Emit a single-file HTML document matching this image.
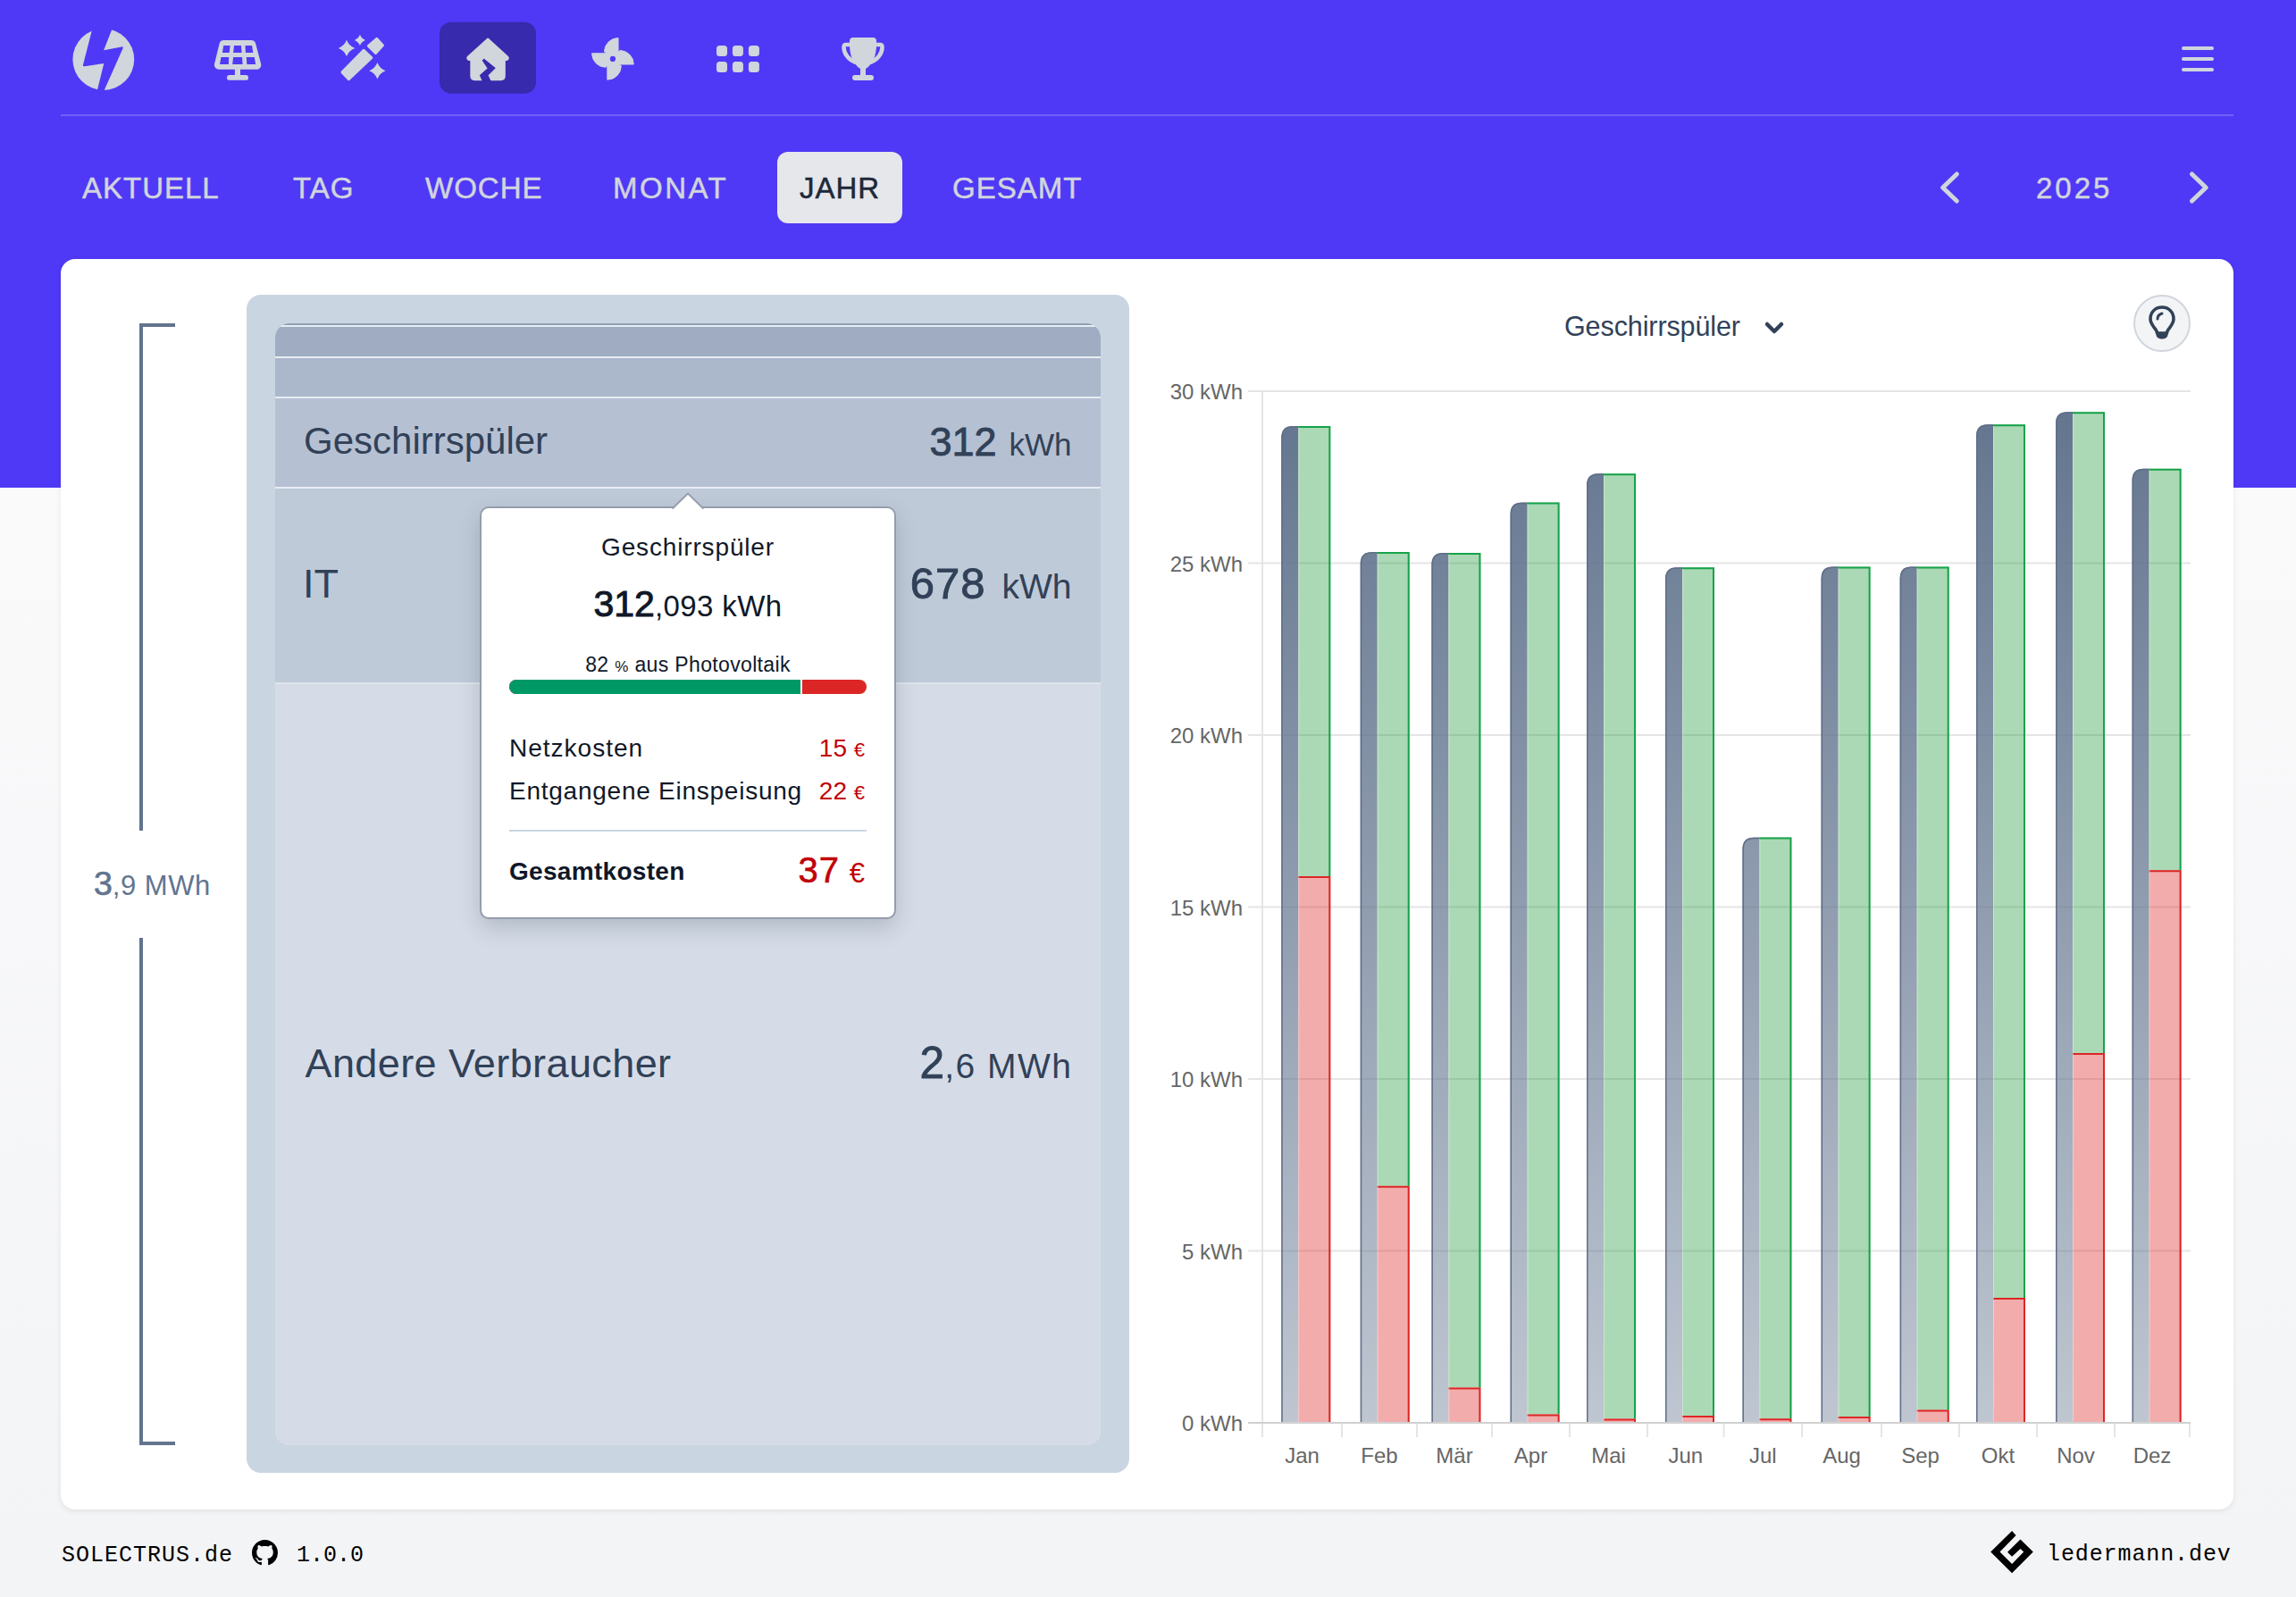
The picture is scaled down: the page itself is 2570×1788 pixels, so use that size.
<!DOCTYPE html>
<html lang="de">
<head>
<meta charset="utf-8">
<title>SOLECTRUS</title>
<style>
html,body{margin:0;padding:0}
body{width:2570px;height:1788px;position:relative;overflow:hidden;background:linear-gradient(180deg,#fafafb 0px,#fafafb 560px,#f3f4f6 1788px);font-family:"Liberation Sans",sans-serif}
.abs{position:absolute;white-space:nowrap}
#hdr{position:absolute;left:0;top:0;width:2570px;height:546px;background:#4f39f6}
#sep{position:absolute;left:68px;top:128px;width:2432px;height:2px;background:rgba(255,255,255,0.2)}
.tab{position:absolute;top:171px;height:79px;line-height:80px;font-size:33px;letter-spacing:1.0px;color:#d1d5dc;-webkit-text-stroke-width:0.5px}
.burger{position:absolute;left:2442px;width:36px;height:4px;border-radius:2px;background:#d1d5dc}
#card{position:absolute;left:68px;top:290px;width:2432px;height:1400px;background:#fff;border-radius:16px;box-shadow:0 2px 6px rgba(0,0,0,0.08)}
.br{position:absolute;background:#62748e}
#outer{position:absolute;left:276px;top:330px;width:988px;height:1319px;background:#cad5e2;border-radius:16px}
#inner{position:absolute;left:308px;top:362px;width:924px;height:1256px;border-radius:16px;overflow:hidden;background:#e8edf4}
.row{position:absolute;left:0;width:924px}
.lbl{position:absolute;left:32px;font-size:44px;color:#314158}
.val{position:absolute;right:32px;color:#314158}
#tip{position:absolute;left:537px;top:567px;width:462px;height:458px;background:#fff;border:2px solid #959dab;border-radius:10px;box-shadow:0 10px 24px rgba(30,41,57,0.18)}
.red{color:#c10007}
</style>
</head>
<body>
<div id="hdr"></div>
<svg width="1100" height="130" viewBox="0 0 1100 130" style="position:absolute;left:0;top:0">
<rect x="492" y="24.7" width="108" height="80" rx="13" fill="#372aac"/>
<defs><mask id="boltm" maskUnits="userSpaceOnUse" x="70" y="20" width="90" height="95"><rect x="70" y="20" width="90" height="95" fill="#fff"/><path d="M105.2,25 L128.4,25 L116.1,56.3 L136,52.4 Q138.5,52 137.6,54 L113.6,108 L107.2,108 L116.3,71.1 L95,74.3 Q92.3,74.6 93,72.5 Z" fill="#000"/></mask></defs>
<circle cx="115.8" cy="66.5" r="34.4" fill="#d1d5dc" mask="url(#boltm)"/>
<path d="M250.4,50.1 L281.3,50.1 L287.3,72.8 L244.9,72.8 Z" fill="#d1d5dc" stroke="#d1d5dc" stroke-width="10" stroke-linejoin="round"/>
<path d="M250.2,51.0 L257.6,51.0 L256.7,59.0 L248.9,59.0 Z" fill="#4f39f6"/>
<path d="M262.0,51.0 L269.9,51.0 L270.6,59.0 L261.1,59.0 Z" fill="#4f39f6"/>
<path d="M274.5,51.0 L282.0,51.0 L283.3,59.0 L274.9,59.0 Z" fill="#4f39f6"/>
<path d="M247.5,64.0 L256.1,64.0 L255.9,71.9 L246.0,71.9 Z" fill="#4f39f6"/>
<path d="M261.1,64.0 L271.0,64.0 L271.6,71.9 L260.2,71.9 Z" fill="#4f39f6"/>
<path d="M275.8,64.0 L284.8,64.0 L286.1,71.9 L276.3,71.9 Z" fill="#4f39f6"/>
<rect x="262.9" y="76" width="6.1" height="9" fill="#d1d5dc"/>
<rect x="253.9" y="84" width="24.1" height="5.8" rx="2.9" fill="#d1d5dc"/>
<path d="M388.00,44.70 Q390.58,51.32 397.20,53.90 Q390.58,56.48 388.00,63.10 Q385.42,56.48 378.80,53.90 Q385.42,51.32 388.00,44.70 Z" fill="#d1d5dc"/>
<path d="M402.90,38.80 Q404.61,43.19 409.00,44.90 Q404.61,46.61 402.90,51.00 Q401.19,46.61 396.80,44.90 Q401.19,43.19 402.90,38.80 Z" fill="#d1d5dc"/>
<path d="M422.40,70.10 Q424.98,76.72 431.60,79.30 Q424.98,81.88 422.40,88.50 Q419.82,81.88 413.20,79.30 Q419.82,76.72 422.40,70.10 Z" fill="#d1d5dc"/>
<path d="M407.1,56.3 L415.8,64.6 L390.4,88.6 L383,80.9 Z" fill="#d1d5dc" stroke="#d1d5dc" stroke-width="3" stroke-linejoin="round"/>
<path d="M412.4,51.5 L420.5,59.5 L428.4,50.7 L421.8,43.4 Z" fill="#d1d5dc" stroke="#d1d5dc" stroke-width="3" stroke-linejoin="round"/>
<path d="M546.1,43.5 L568,63.5 Q570,65.5 567,67 L564.8,67 V85 Q564.8,89.2 560.5,89.2 H531.5 Q527.3,89.2 527.3,85 V67 L525,67 Q522,65.5 524,63.5 Z" fill="#d1d5dc" stroke="#d1d5dc" stroke-width="2" stroke-linejoin="round"/>
<path d="M541.7,66.1 L554.2,76.2 L546.1,84.3 L549.1,91 L540.4,91 L537.3,84.3 L546.1,76.6 L540.2,67.8 Z" fill="#372aac" stroke="#372aac" stroke-width="1" stroke-linejoin="round"/>
<path d="M692.0,58.1 L692.0,42.6 A15.5,15.5 0 0 0 676.5,58.1 Z" fill="#d1d5dc" stroke="#d1d5dc" stroke-width="1" stroke-linejoin="round"/>
<path d="M693.7,72.0 L709.2,72.0 A15.5,15.5 0 0 0 693.7,56.5 Z" fill="#d1d5dc" stroke="#d1d5dc" stroke-width="1" stroke-linejoin="round"/>
<path d="M679.8,73.7 L679.8,89.2 A15.5,15.5 0 0 0 695.3,73.7 Z" fill="#d1d5dc" stroke="#d1d5dc" stroke-width="1" stroke-linejoin="round"/>
<path d="M678.1,59.8 L662.6,59.8 A15.5,15.5 0 0 0 678.1,75.3 Z" fill="#d1d5dc" stroke="#d1d5dc" stroke-width="1" stroke-linejoin="round"/>
<rect x="677.5" y="57.5" width="17" height="17" fill="#d1d5dc"/>
<circle cx="685.9" cy="65.9" r="3.1" fill="#4f39f6"/>
<rect x="802.0" y="51.0" width="12" height="12" rx="3.5" fill="#d1d5dc"/>
<rect x="802.0" y="68.9" width="12" height="12" rx="3.5" fill="#d1d5dc"/>
<rect x="819.9" y="51.0" width="12" height="12" rx="3.5" fill="#d1d5dc"/>
<rect x="819.9" y="68.9" width="12" height="12" rx="3.5" fill="#d1d5dc"/>
<rect x="837.9" y="51.0" width="12" height="12" rx="3.5" fill="#d1d5dc"/>
<rect x="837.9" y="68.9" width="12" height="12" rx="3.5" fill="#d1d5dc"/>
<path d="M955,42 H977 Q981,42 981,46 V50 C981,62 977,72 969,77 H963 C955,72 951,62 951,50 V46 Q951,42 955,42 Z" fill="#d1d5dc"/>
<path d="M955,50 L947,50 Q944.5,50 944.5,53 C944.5,60 950,67 957,69.5" fill="none" stroke="#d1d5dc" stroke-width="4.6" stroke-linecap="round"/>
<path d="M977,50 L985,50 Q987.5,50 987.5,53 C987.5,60 982,67 975,69.5" fill="none" stroke="#d1d5dc" stroke-width="4.6" stroke-linecap="round"/>
<rect x="963" y="76" width="6" height="9" fill="#d1d5dc"/>
<rect x="954" y="84" width="24" height="6" rx="3" fill="#d1d5dc"/>
</svg>
<div id="sep"></div>
<div class="burger" style="top:52px"></div>
<div class="burger" style="top:64px"></div>
<div class="burger" style="top:76px"></div>

<div class="tab" style="left:92px">AKTUELL</div>
<div class="tab" style="left:328px">TAG</div>
<div class="tab" style="left:476px">WOCHE</div>
<div class="tab" style="left:686px;letter-spacing:2.5px">MONAT</div>
<div style="position:absolute;left:870px;top:170px;width:140px;height:80px;border-radius:12px;background:#e5e7eb"></div>
<div class="tab" style="left:895px;color:#1e2939">JAHR</div>
<div class="tab" style="left:1066px">GESAMT</div>
<svg style="position:absolute;left:2160px;top:185px" width="330" height="50" viewBox="2160 185 330 50">
<path d="M2190.3,195 L2174.6,210 L2190.3,225" fill="none" stroke="#d1d5dc" stroke-width="5" stroke-linecap="round" stroke-linejoin="round"/>
<path d="M2453.5,195 L2469.2,210 L2453.5,225" fill="none" stroke="#d1d5dc" stroke-width="5" stroke-linecap="round" stroke-linejoin="round"/>
</svg>
<div class="tab" style="left:2279px;letter-spacing:3px">2025</div>

<div id="card"></div>
<!-- bracket -->
<div class="br" style="left:156px;top:362px;width:4px;height:568px"></div>
<div class="br" style="left:156px;top:362px;width:40px;height:4px"></div>
<div class="br" style="left:156px;top:1050px;width:4px;height:568px"></div>
<div class="br" style="left:156px;top:1614px;width:40px;height:4px"></div>
<div class="abs" id="t_total" style="left:105px;top:967.5px;color:#62748e;line-height:42px"><span style="font-size:37.5px;-webkit-text-stroke:0.7px #62748e">3</span><span style="font-size:31px;letter-spacing:0.5px">,9 MWh</span></div>

<div id="outer"></div>
<div id="inner">
  <div class="row" style="top:0;height:2px;background:#8f9eb3"></div>
  <div class="row" style="top:4px;height:33px;background:#9facc1"></div>
  <div class="row" style="top:39px;height:43px;background:#abb7ca"></div>
  <div class="row" style="top:84px;height:99px;background:#b5c0d2"></div>
  <div class="row" style="top:185px;height:217px;background:#bfcad8"></div>
  <div class="row" style="top:404px;height:860px;background:#d5dce7"></div>
  <div class="row" style="top:402px;height:2px;background:#dfe5ee"></div>
</div>
<div class="abs" id="t_gs" style="left:340px;top:470px;font-size:42px;line-height:48px;color:#314158">Geschirrspüler</div>
<div class="abs" id="t_gsv" style="right:1370.5px;top:467.5px;line-height:54px;color:#314158"><span style="font-size:45px;-webkit-text-stroke:0.9px #314158">312</span><span style="font-size:35px;margin-left:14px">kWh</span></div>
<div class="abs" id="t_it" style="left:339px;top:628px;font-size:45px;line-height:52px;color:#314158">IT</div>
<div class="abs" id="t_itv" style="right:1370.5px;top:624px;line-height:58px;color:#314158"><span style="font-size:49px;letter-spacing:1px;-webkit-text-stroke:0.9px #314158">678</span><span style="font-size:39px;margin-left:18px">kWh</span></div>
<div class="abs" id="t_av" style="left:341.5px;top:1165px;letter-spacing:0.4px;font-size:45px;line-height:52px;color:#314158">Andere Verbraucher</div>
<div class="abs" id="t_avv" style="right:1369.5px;top:1161px;line-height:58px;color:#314158"><span style="font-size:49.5px;-webkit-text-stroke:0.9px #314158">2</span><span style="font-size:39px;letter-spacing:1.5px">,6 MWh</span></div>

<!-- tooltip -->
<div id="tip"></div>
<svg style="position:absolute;left:750px;top:550px" width="40" height="22" viewBox="0 0 40 22">
<path d="M2.6,19.6 L20,2.6 L37.4,19.6" fill="#fff" stroke="#959dab" stroke-width="2"/>
<rect x="7" y="16.8" width="26" height="3" fill="#fff"/>
</svg>
<div class="abs" id="tp_title" style="left:537px;width:466px;top:596px;text-align:center;font-size:28px;letter-spacing:0.85px;line-height:34px;color:#101828">Geschirrspüler</div>
<div class="abs" id="tp_val" style="left:537px;width:466px;top:652px;text-align:center;color:#101828;line-height:48px"><span style="font-size:41px;-webkit-text-stroke:1px #101828">312</span><span style="font-size:33px;letter-spacing:0.4px">,093 kWh</span></div>
<div class="abs" id="tp_pv" style="left:537px;width:466px;top:730px;text-align:center;font-size:23px;letter-spacing:0.35px;color:#101828;line-height:28px">82 <span style="font-size:17px">%</span> aus Photovoltaik</div>
<div style="position:absolute;left:570px;top:761px;width:400px;height:16px;border-radius:8px;overflow:hidden;background:#dc2626">
  <div style="position:absolute;left:0;top:0;width:326px;height:16px;background:#009966"></div>
  <div style="position:absolute;left:326px;top:0;width:2px;height:16px;background:#fff"></div>
</div>
<div class="abs" id="tp_nk" style="left:570px;top:821px;font-size:28px;letter-spacing:1px;line-height:34px;color:#101828">Netzkosten</div>
<div class="abs red" style="right:1602px;top:821px;font-size:28px;line-height:34px">15 <span style="font-size:22px">€</span></div>
<div class="abs" id="tp_ee" style="left:570px;top:869px;font-size:28px;letter-spacing:0.75px;line-height:34px;color:#101828">Entgangene Einspeisung</div>
<div class="abs red" style="right:1602px;top:869px;font-size:28px;line-height:34px">22 <span style="font-size:22px">€</span></div>
<div style="position:absolute;left:570px;top:929px;width:400px;height:2px;background:#cad5e2"></div>
<div class="abs" id="tp_gk" style="left:570px;top:959px;font-size:28px;letter-spacing:0.3px;line-height:34px;color:#101828;font-weight:bold">Gesamtkosten</div>
<div class="abs red" style="right:1602px;top:952px;font-size:39px;line-height:44px"><span style="font-size:40px;letter-spacing:1px;-webkit-text-stroke:0.6px #c10007">37</span> <span style="font-size:31px">€</span></div>

<svg width="2570" height="1788" viewBox="0 0 2570 1788" style="position:absolute;left:0;top:0">
<defs><linearGradient id="gg" x1="0" y1="0" x2="0" y2="1" gradientUnits="userSpaceOnUse" ></linearGradient><linearGradient id="greyg" gradientUnits="userSpaceOnUse" x1="0" y1="438" x2="0" y2="1593"><stop offset="0" stop-color="#62748e" stop-opacity="1"/><stop offset="1" stop-color="#62748e" stop-opacity="0.41"/></linearGradient></defs>
<rect x="1397" y="1592.0" width="1055.0" height="2" fill="#e5e5e5"/>
<rect x="1397" y="1399.5" width="1055.0" height="2" fill="#e5e5e5"/>
<rect x="1397" y="1207.0" width="1055.0" height="2" fill="#e5e5e5"/>
<rect x="1397" y="1014.5" width="1055.0" height="2" fill="#e5e5e5"/>
<rect x="1397" y="822.0" width="1055.0" height="2" fill="#e5e5e5"/>
<rect x="1397" y="629.5" width="1055.0" height="2" fill="#e5e5e5"/>
<rect x="1397" y="437.0" width="1055.0" height="2" fill="#e5e5e5"/>
<rect x="1412" y="437" width="2" height="1172.0" fill="#e5e5e5"/>
<rect x="1412.0" y="1593" width="2" height="16" fill="#e5e5e5"/>
<rect x="1501.0" y="1593" width="2" height="16" fill="#e5e5e5"/>
<rect x="1585.0" y="1593" width="2" height="16" fill="#e5e5e5"/>
<rect x="1669.0" y="1593" width="2" height="16" fill="#e5e5e5"/>
<rect x="1756.0" y="1593" width="2" height="16" fill="#e5e5e5"/>
<rect x="1843.0" y="1593" width="2" height="16" fill="#e5e5e5"/>
<rect x="1928.6" y="1593" width="2" height="16" fill="#e5e5e5"/>
<rect x="2016.0" y="1593" width="2" height="16" fill="#e5e5e5"/>
<rect x="2105.0" y="1593" width="2" height="16" fill="#e5e5e5"/>
<rect x="2192.0" y="1593" width="2" height="16" fill="#e5e5e5"/>
<rect x="2279.0" y="1593" width="2" height="16" fill="#e5e5e5"/>
<rect x="2366.0" y="1593" width="2" height="16" fill="#e5e5e5"/>
<rect x="2450.0" y="1593" width="2" height="16" fill="#e5e5e5"/>
<path d="M1434.3,1592.0 V490.0 Q1434.3,477.0 1447.3,477.0 H1453.3 V1592.0 Z" fill="url(#greyg)"/>
<path d="M1435.0,1592.0 V490.0 Q1435.0,477.8 1447.3,477.8 H1453.3" fill="none" stroke="#5f6e87" stroke-width="1.5"/>
<rect x="1453.3" y="477.0" width="36" height="504.0" fill="rgba(22,150,50,0.36)"/>
<rect x="1453.3" y="981.0" width="36" height="611.0" fill="rgba(220,38,38,0.38)"/>
<path d="M1453.3,478.0 H1488.3 V981.0" fill="none" stroke="#16a34a" stroke-width="2"/>
<path d="M1453.3,982.0 H1488.3 V1592.0" fill="none" stroke="#dc2626" stroke-width="2"/>
<rect x="1453.3" y="479.0" width="1" height="1113.0" fill="rgba(255,255,255,0.35)"/>
<path d="M1522.7,1592.0 V631.0 Q1522.7,618.0 1535.7,618.0 H1541.7 V1592.0 Z" fill="url(#greyg)"/>
<path d="M1523.5,1592.0 V631.0 Q1523.5,618.8 1535.7,618.8 H1541.7" fill="none" stroke="#5f6e87" stroke-width="1.5"/>
<rect x="1541.7" y="618.0" width="36" height="709.8" fill="rgba(22,150,50,0.36)"/>
<rect x="1541.7" y="1327.8" width="36" height="264.2" fill="rgba(220,38,38,0.38)"/>
<path d="M1541.7,619.0 H1576.7 V1327.8" fill="none" stroke="#16a34a" stroke-width="2"/>
<path d="M1541.7,1328.8 H1576.7 V1592.0" fill="none" stroke="#dc2626" stroke-width="2"/>
<rect x="1541.7" y="620.0" width="1" height="972.0" fill="rgba(255,255,255,0.35)"/>
<path d="M1602.4,1592.0 V632.0 Q1602.4,619.0 1615.4,619.0 H1621.4 V1592.0 Z" fill="url(#greyg)"/>
<path d="M1603.2,1592.0 V632.0 Q1603.2,619.8 1615.4,619.8 H1621.4" fill="none" stroke="#5f6e87" stroke-width="1.5"/>
<rect x="1621.4" y="619.0" width="36" height="934.4" fill="rgba(22,150,50,0.36)"/>
<rect x="1621.4" y="1553.4" width="36" height="38.6" fill="rgba(220,38,38,0.38)"/>
<path d="M1621.4,620.0 H1656.4 V1553.4" fill="none" stroke="#16a34a" stroke-width="2"/>
<path d="M1621.4,1554.4 H1656.4 V1592.0" fill="none" stroke="#dc2626" stroke-width="2"/>
<rect x="1621.4" y="621.0" width="1" height="971.0" fill="rgba(255,255,255,0.35)"/>
<path d="M1690.6,1592.0 V575.6 Q1690.6,562.6 1703.6,562.6 H1709.6 V1592.0 Z" fill="url(#greyg)"/>
<path d="M1691.3,1592.0 V575.6 Q1691.3,563.4 1703.6,563.4 H1709.6" fill="none" stroke="#5f6e87" stroke-width="1.5"/>
<rect x="1709.6" y="562.6" width="36" height="1020.9" fill="rgba(22,150,50,0.36)"/>
<rect x="1709.6" y="1583.5" width="36" height="8.5" fill="rgba(220,38,38,0.38)"/>
<path d="M1709.6,563.6 H1744.6 V1583.5" fill="none" stroke="#16a34a" stroke-width="2"/>
<path d="M1709.6,1584.5 H1744.6 V1592.0" fill="none" stroke="#dc2626" stroke-width="2"/>
<rect x="1709.6" y="564.6" width="1" height="1027.4" fill="rgba(255,255,255,0.35)"/>
<path d="M1776.0,1592.0 V543.3 Q1776.0,530.3 1789.0,530.3 H1795.0 V1592.0 Z" fill="url(#greyg)"/>
<path d="M1776.8,1592.0 V543.3 Q1776.8,531.0 1789.0,531.0 H1795.0" fill="none" stroke="#5f6e87" stroke-width="1.5"/>
<rect x="1795.0" y="530.3" width="36" height="1058.1" fill="rgba(22,150,50,0.36)"/>
<rect x="1795.0" y="1588.4" width="36" height="3.6" fill="rgba(220,38,38,0.38)"/>
<path d="M1795.0,531.3 H1830.0 V1588.4" fill="none" stroke="#16a34a" stroke-width="2"/>
<path d="M1795.0,1589.4 H1830.0 V1592.0" fill="none" stroke="#dc2626" stroke-width="2"/>
<rect x="1795.0" y="532.3" width="1" height="1059.7" fill="rgba(255,255,255,0.35)"/>
<path d="M1864.0,1592.0 V648.2 Q1864.0,635.2 1877.0,635.2 H1883.0 V1592.0 Z" fill="url(#greyg)"/>
<path d="M1864.8,1592.0 V648.2 Q1864.8,636.0 1877.0,636.0 H1883.0" fill="none" stroke="#5f6e87" stroke-width="1.5"/>
<rect x="1883.0" y="635.2" width="36" height="949.8" fill="rgba(22,150,50,0.36)"/>
<rect x="1883.0" y="1585.0" width="36" height="7.0" fill="rgba(220,38,38,0.38)"/>
<path d="M1883.0,636.2 H1918.0 V1585.0" fill="none" stroke="#16a34a" stroke-width="2"/>
<path d="M1883.0,1586.0 H1918.0 V1592.0" fill="none" stroke="#dc2626" stroke-width="2"/>
<rect x="1883.0" y="637.2" width="1" height="954.8" fill="rgba(255,255,255,0.35)"/>
<path d="M1950.4,1592.0 V950.6 Q1950.4,937.6 1963.4,937.6 H1969.4 V1592.0 Z" fill="url(#greyg)"/>
<path d="M1951.2,1592.0 V950.6 Q1951.2,938.4 1963.4,938.4 H1969.4" fill="none" stroke="#5f6e87" stroke-width="1.5"/>
<rect x="1969.4" y="937.6" width="36" height="650.7" fill="rgba(22,150,50,0.36)"/>
<rect x="1969.4" y="1588.3" width="36" height="3.7" fill="rgba(220,38,38,0.38)"/>
<path d="M1969.4,938.6 H2004.4 V1588.3" fill="none" stroke="#16a34a" stroke-width="2"/>
<path d="M1969.4,1589.3 H2004.4 V1592.0" fill="none" stroke="#dc2626" stroke-width="2"/>
<rect x="1969.4" y="939.6" width="1" height="652.4" fill="rgba(255,255,255,0.35)"/>
<path d="M2038.6,1592.0 V647.5 Q2038.6,634.5 2051.6,634.5 H2057.6 V1592.0 Z" fill="url(#greyg)"/>
<path d="M2039.3,1592.0 V647.5 Q2039.3,635.2 2051.6,635.2 H2057.6" fill="none" stroke="#5f6e87" stroke-width="1.5"/>
<rect x="2057.6" y="634.5" width="36" height="951.5" fill="rgba(22,150,50,0.36)"/>
<rect x="2057.6" y="1586.0" width="36" height="6.0" fill="rgba(220,38,38,0.38)"/>
<path d="M2057.6,635.5 H2092.6 V1586.0" fill="none" stroke="#16a34a" stroke-width="2"/>
<path d="M2057.6,1587.0 H2092.6 V1592.0" fill="none" stroke="#dc2626" stroke-width="2"/>
<rect x="2057.6" y="636.5" width="1" height="955.5" fill="rgba(255,255,255,0.35)"/>
<path d="M2126.7,1592.0 V647.5 Q2126.7,634.5 2139.7,634.5 H2145.7 V1592.0 Z" fill="url(#greyg)"/>
<path d="M2127.4,1592.0 V647.5 Q2127.4,635.2 2139.7,635.2 H2145.7" fill="none" stroke="#5f6e87" stroke-width="1.5"/>
<rect x="2145.7" y="634.5" width="36" height="944.0" fill="rgba(22,150,50,0.36)"/>
<rect x="2145.7" y="1578.5" width="36" height="13.5" fill="rgba(220,38,38,0.38)"/>
<path d="M2145.7,635.5 H2180.7 V1578.5" fill="none" stroke="#16a34a" stroke-width="2"/>
<path d="M2145.7,1579.5 H2180.7 V1592.0" fill="none" stroke="#dc2626" stroke-width="2"/>
<rect x="2145.7" y="636.5" width="1" height="955.5" fill="rgba(255,255,255,0.35)"/>
<path d="M2212.0,1592.0 V488.2 Q2212.0,475.2 2225.0,475.2 H2231.0 V1592.0 Z" fill="url(#greyg)"/>
<path d="M2212.8,1592.0 V488.2 Q2212.8,475.9 2225.0,475.9 H2231.0" fill="none" stroke="#5f6e87" stroke-width="1.5"/>
<rect x="2231.0" y="475.2" width="36" height="977.8" fill="rgba(22,150,50,0.36)"/>
<rect x="2231.0" y="1453.0" width="36" height="139.0" fill="rgba(220,38,38,0.38)"/>
<path d="M2231.0,476.2 H2266.0 V1453.0" fill="none" stroke="#16a34a" stroke-width="2"/>
<path d="M2231.0,1454.0 H2266.0 V1592.0" fill="none" stroke="#dc2626" stroke-width="2"/>
<rect x="2231.0" y="477.2" width="1" height="1114.8" fill="rgba(255,255,255,0.35)"/>
<path d="M2301.0,1592.0 V474.3 Q2301.0,461.3 2314.0,461.3 H2320.0 V1592.0 Z" fill="url(#greyg)"/>
<path d="M2301.8,1592.0 V474.3 Q2301.8,462.1 2314.0,462.1 H2320.0" fill="none" stroke="#5f6e87" stroke-width="1.5"/>
<rect x="2320.0" y="461.3" width="36" height="717.7" fill="rgba(22,150,50,0.36)"/>
<rect x="2320.0" y="1179.0" width="36" height="413.0" fill="rgba(220,38,38,0.38)"/>
<path d="M2320.0,462.3 H2355.0 V1179.0" fill="none" stroke="#16a34a" stroke-width="2"/>
<path d="M2320.0,1180.0 H2355.0 V1592.0" fill="none" stroke="#dc2626" stroke-width="2"/>
<rect x="2320.0" y="463.3" width="1" height="1128.7" fill="rgba(255,255,255,0.35)"/>
<path d="M2386.6,1592.0 V537.8 Q2386.6,524.8 2399.6,524.8 H2405.6 V1592.0 Z" fill="url(#greyg)"/>
<path d="M2387.3,1592.0 V537.8 Q2387.3,525.5 2399.6,525.5 H2405.6" fill="none" stroke="#5f6e87" stroke-width="1.5"/>
<rect x="2405.6" y="524.8" width="36" height="449.5" fill="rgba(22,150,50,0.36)"/>
<rect x="2405.6" y="974.3" width="36" height="617.7" fill="rgba(220,38,38,0.38)"/>
<path d="M2405.6,525.8 H2440.6 V974.3" fill="none" stroke="#16a34a" stroke-width="2"/>
<path d="M2405.6,975.3 H2440.6 V1592.0" fill="none" stroke="#dc2626" stroke-width="2"/>
<rect x="2405.6" y="526.8" width="1" height="1065.2" fill="rgba(255,255,255,0.35)"/>
<rect x="1397" y="1592" width="1055.0" height="2" fill="#d0d0d0"/>
<text x="1391" y="1602.0" text-anchor="end" font-family="Liberation Sans" font-size="24" fill="#666">0 kWh</text>
<text x="1391" y="1409.5" text-anchor="end" font-family="Liberation Sans" font-size="24" fill="#666">5 kWh</text>
<text x="1391" y="1217.0" text-anchor="end" font-family="Liberation Sans" font-size="24" fill="#666">10 kWh</text>
<text x="1391" y="1024.5" text-anchor="end" font-family="Liberation Sans" font-size="24" fill="#666">15 kWh</text>
<text x="1391" y="832.0" text-anchor="end" font-family="Liberation Sans" font-size="24" fill="#666">20 kWh</text>
<text x="1391" y="639.5" text-anchor="end" font-family="Liberation Sans" font-size="24" fill="#666">25 kWh</text>
<text x="1391" y="447.0" text-anchor="end" font-family="Liberation Sans" font-size="24" fill="#666">30 kWh</text>
<text x="1457.5" y="1638" text-anchor="middle" font-family="Liberation Sans" font-size="24" fill="#666">Jan</text>
<text x="1544.0" y="1638" text-anchor="middle" font-family="Liberation Sans" font-size="24" fill="#666">Feb</text>
<text x="1628.0" y="1638" text-anchor="middle" font-family="Liberation Sans" font-size="24" fill="#666">Mär</text>
<text x="1713.5" y="1638" text-anchor="middle" font-family="Liberation Sans" font-size="24" fill="#666">Apr</text>
<text x="1800.5" y="1638" text-anchor="middle" font-family="Liberation Sans" font-size="24" fill="#666">Mai</text>
<text x="1886.8" y="1638" text-anchor="middle" font-family="Liberation Sans" font-size="24" fill="#666">Jun</text>
<text x="1973.3" y="1638" text-anchor="middle" font-family="Liberation Sans" font-size="24" fill="#666">Jul</text>
<text x="2061.5" y="1638" text-anchor="middle" font-family="Liberation Sans" font-size="24" fill="#666">Aug</text>
<text x="2149.5" y="1638" text-anchor="middle" font-family="Liberation Sans" font-size="24" fill="#666">Sep</text>
<text x="2236.5" y="1638" text-anchor="middle" font-family="Liberation Sans" font-size="24" fill="#666">Okt</text>
<text x="2323.5" y="1638" text-anchor="middle" font-family="Liberation Sans" font-size="24" fill="#666">Nov</text>
<text x="2409.0" y="1638" text-anchor="middle" font-family="Liberation Sans" font-size="24" fill="#666">Dez</text>
</svg>

<!-- chart header -->
<div class="abs" id="ch_title" style="left:1751px;top:348px;font-size:30.5px;letter-spacing:-0.1px;line-height:34px;color:#314158">Geschirrspüler</div>
<svg style="position:absolute;left:1970px;top:353.5px" width="32" height="26" viewBox="0 0 32 26">
<path d="M8,9 L16,17 L24,9" fill="none" stroke="#314158" stroke-width="4.5" stroke-linecap="round" stroke-linejoin="round"/>
</svg>
<div style="position:absolute;left:2388px;top:330px;width:60px;height:60px;border-radius:50%;border:2px solid #d1d5dc;background:#f3f4f6"></div>
<svg style="position:absolute;left:2400px;top:340px" width="40" height="44" viewBox="2400 340 40 44">
<path d="M2420,344 C2412,344 2407,350 2407,357 C2407,362 2410,365 2413,369 C2414,370.5 2414.5,372 2414.5,373 L2425.5,373 C2425.5,372 2426,370.5 2427,369 C2430,365 2433,362 2433,357 C2433,350 2428,344 2420,344 Z" fill="none" stroke="#314158" stroke-width="3.6" stroke-linejoin="round"/>
<path d="M2413.5,372 H2426.5 V375 A6.5,4.5 0 0 1 2413.5,375 Z" fill="#314158"/>
<path d="M2415,357 C2415,354 2417,352 2420,351" fill="none" stroke="#314158" stroke-width="3" stroke-linecap="round"/>
</svg>

<!-- footer -->
<div class="abs" style="left:69px;top:1726.5px;font-family:'Liberation Mono',monospace;font-size:25px;letter-spacing:1px;line-height:30px;color:#000">SOLECTRUS.de</div>
<svg style="position:absolute;left:282px;top:1724px" width="29" height="29" viewBox="0 0 16 16">
<path fill="#000" d="M8 0C3.58 0 0 3.58 0 8c0 3.54 2.29 6.53 5.47 7.59.4.07.55-.17.55-.38 0-.19-.01-.82-.01-1.49-2.01.37-2.53-.49-2.69-.94-.09-.23-.48-.94-.82-1.13-.28-.15-.68-.52-.01-.53.63-.01 1.08.58 1.23.82.72 1.21 1.87.87 2.33.66.07-.52.28-.87.51-1.07-1.78-.2-3.64-.89-3.640-3.95 0-.87.31-1.59.82-2.15-.08-.2-.36-1.02.08-2.12 0 0 .67-.21 2.2.82.64-.18 1.32-.27 2-.27.68 0 1.36.09 2 .27 1.53-1.04 2.2-.82 2.2-.82.44 1.1.16 1.92.08 2.12.51.56.82 1.27.82 2.15 0 3.07-1.87 3.75-3.65 3.95.29.25.54.73.54 1.48 0 1.07-.01 1.93-.01 2.2 0 .21.15.46.55.38A8.013 8.013 0 0016 8c0-4.42-3.58-8-8-8z"/>
</svg>
<div class="abs" style="left:332px;top:1726.5px;font-family:'Liberation Mono',monospace;font-size:25px;letter-spacing:0px;line-height:30px;color:#000">1.0.0</div>
<svg style="position:absolute;left:2220px;top:1706px" width="64" height="64" viewBox="2220 1706 64 64">
<path d="M2252.1,1714 L2256.6,1718.9 L2238.5,1737.5 L2252.1,1751 L2265.2,1737.5 L2261.5,1733.9 L2252.1,1742.8 L2247,1737.7 L2261.5,1723.6 L2275.8,1737.5 L2252.1,1761.2 L2228.2,1737.5 Z" fill="#000"/>
</svg>
<div class="abs" style="left:2291px;top:1725.5px;font-family:'Liberation Mono',monospace;font-size:25px;letter-spacing:0.9px;line-height:30px;color:#000">ledermann.dev</div>
</body>
</html>
